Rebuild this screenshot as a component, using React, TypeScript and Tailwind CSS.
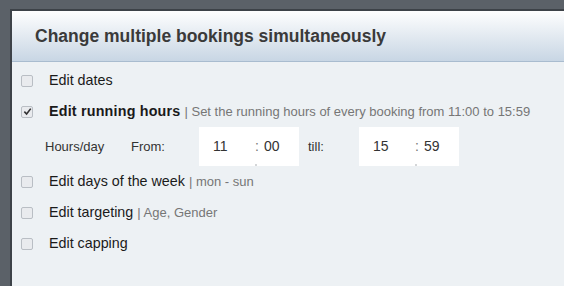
import React from "react"

function Box({ checked = false }: { checked?: boolean }) {
  return (
    <span className="flex h-[12px] w-[12px] shrink-0 items-center justify-center rounded-[2px] border border-[#b9bec4] bg-[#e9ebee]">
      {checked && (
        <svg viewBox="0 0 10 10" className="h-[9px] w-[9px]">
          <path d="M1.5 5.2 L4 7.8 L8.6 1.8" fill="none" stroke="#333" strokeWidth="1.8" />
        </svg>
      )}
    </span>
  )
}

function Row({ checked, label, note, bold }: { checked?: boolean; label: string; note?: string; bold?: boolean }) {
  return (
    <div className="flex h-[31px] items-center">
      <Box checked={checked} />
      <span className={"ml-[16px] text-[14.3px] text-[#1a1a1a] " + (bold ? "font-bold tracking-[0.2px]" : "")}>{label}</span>
      {note && <span className="ml-[4px] text-[13px] text-[#767676]">| {note}</span>}
    </div>
  )
}

function TimeBox({ h, m }: { h: string; m: string }) {
  return (
    <div className="relative flex h-[39px] w-[100px] items-center bg-white text-[14px] text-[#333]">
      <span className="ml-[14px] w-[42px]">{h}</span>
      <span className="w-[9px] text-[#777]">:</span>
      <span>{m}</span>
      <span className="absolute bottom-0 left-[56px] h-[2px] w-[2px] bg-[#d4d6d8]"></span>
    </div>
  )
}

export default function App() {
  return (
    <div className="h-[286px] w-[564px] overflow-hidden bg-[#5b6168] pl-[10px] pt-[9px] font-['Liberation_Sans',Arial,sans-serif]">
      <div className="h-full border-l-2 border-t-2 border-[#3d4248]">
        <div className="flex h-[51px] items-center border-b border-[#a9bccf] bg-gradient-to-b from-[#fefefe] to-[#c8d6e4] pl-[23px]">
          <h1 className="text-[17.5px] font-bold text-[#3a3a3a]">Change multiple bookings simultaneously</h1>
        </div>
        <div className="h-full bg-[#edf1f4] pl-[9px] pt-[3px]">
          <Row label="Edit dates" />
          <Row checked bold label="Edit running hours" note="Set the running hours of every booking from 11:00 to 15:59" />
          <div className="ml-[24px] flex items-center text-[13px] text-[#333]">
            <span className="w-[86px]">Hours/day</span>
            <span className="w-[68px]">From:</span>
            <TimeBox h="11" m="00" />
            <span className="ml-[9px] w-[51px]">till:</span>
            <TimeBox h="15" m="59" />
          </div>
          <Row label="Edit days of the week" note="mon - sun" />
          <Row label="Edit targeting" note="Age, Gender" />
          <Row label="Edit capping" />
        </div>
      </div>
    </div>
  )
}
